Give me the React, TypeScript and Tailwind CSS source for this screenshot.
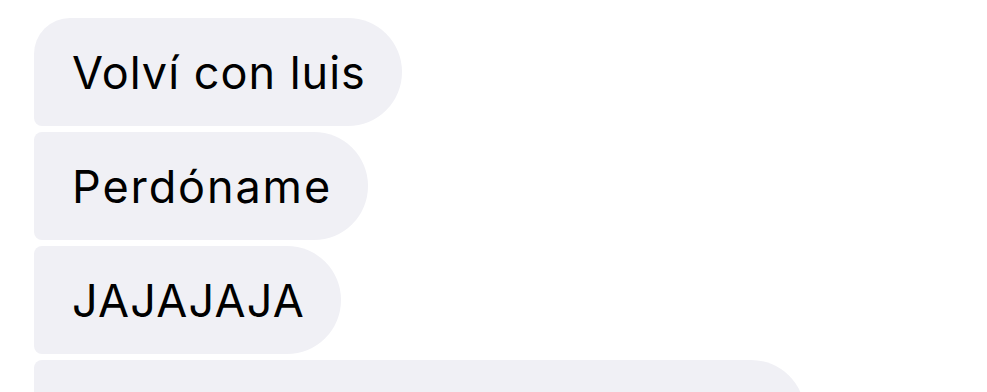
const messages = [
  { id: 1, text: 'Volví con luis', first: true, tracking: 'tracking-[1px]' },
  { id: 2, text: 'Perdóname', first: false, tracking: 'tracking-[1.9px]' },
  { id: 3, text: 'JAJAJAJA', first: false, tracking: 'tracking-[1.2px]' },
  { id: 4, text: '', first: false, wide: true, tracking: '' },
];

export default function App() {
  return (
    <div className="w-[987px] h-[392px] overflow-hidden bg-white font-['Inter',sans-serif]">
      <div className="flex flex-col items-start gap-[6px] pt-[18px] pl-[34px]">
        {messages.map((m) => (
          <div
            key={m.id}
            className={`flex items-center h-[108px] shrink-0 bg-[#f0f0f5] text-black text-[45px] leading-none pl-[38px] pr-[36px] rounded-r-[54px] rounded-bl-[8px] ${m.tracking} ${
              m.first ? 'rounded-tl-[36px]' : 'rounded-tl-[8px]'
            } ${m.wide ? 'w-[771px]' : ''}`}
          >
            {m.text}
          </div>
        ))}
      </div>
    </div>
  );
}
